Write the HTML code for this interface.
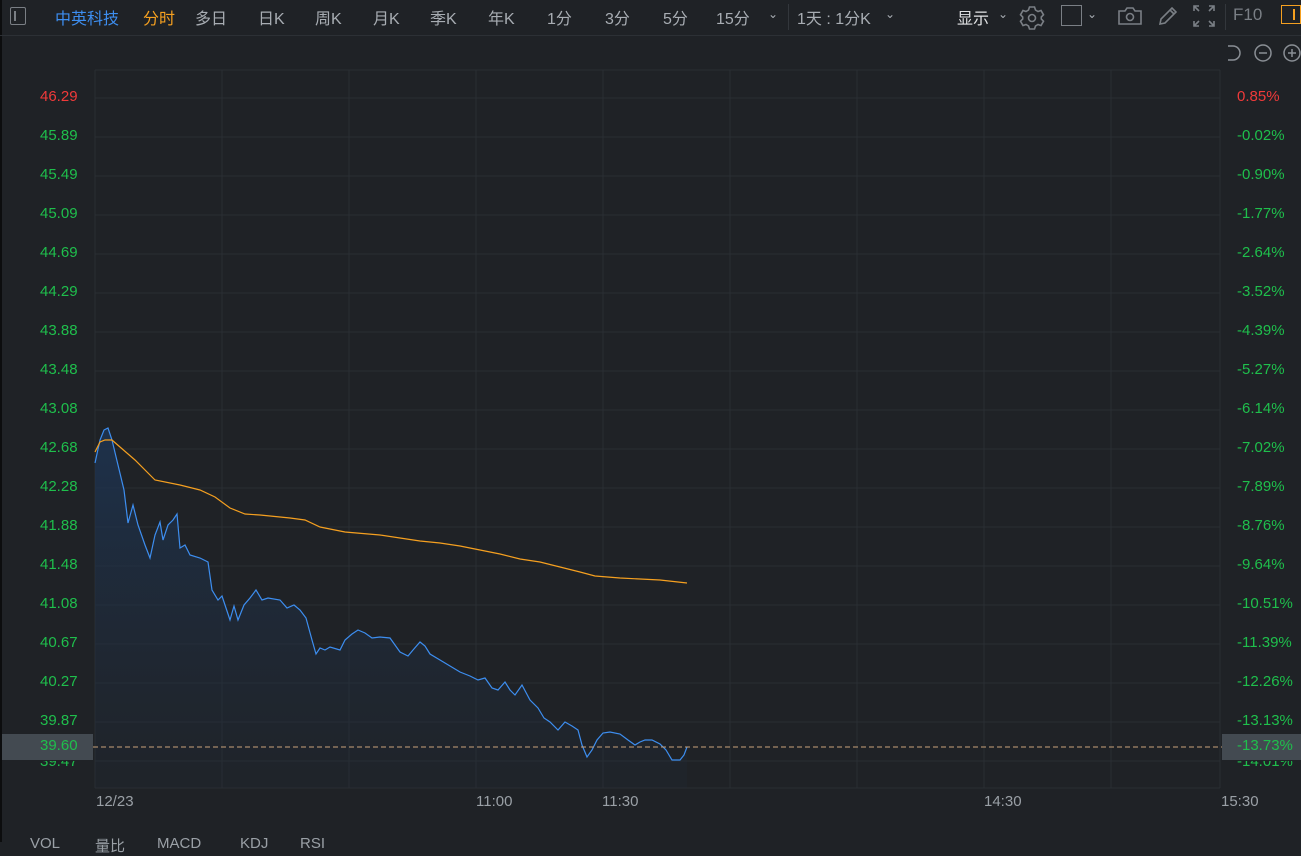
<!DOCTYPE html><html><head><meta charset="utf-8"><style>
body{margin:0;width:1301px;height:842px;overflow:hidden;background:#1f2226;font-family:"Liberation Sans","Noto Sans CJK SC",sans-serif;position:relative}
.t{position:absolute;top:5px;font-size:16px;color:#a8adb3;white-space:nowrap}
.l{position:absolute;font-size:15px;color:#1fbf4c;white-space:nowrap}
.lr{position:absolute;left:1237px;font-size:15px;color:#1fbf4c}
.b{position:absolute;top:835px;font-size:15px;color:#9aa0a6}
</style></head><body>
<div style="position:absolute;left:0;top:0;width:2px;height:842px;background:#0c0d0e"></div>
<div style="position:absolute;left:0;top:35px;width:1301px;height:1px;background:#2c3035"></div>
<div style="position:absolute;left:10px;top:7px;width:14px;height:16px;border:1.5px solid #7a7f85;border-radius:2px"></div>
<div style="position:absolute;left:14px;top:11px;width:1.5px;height:10px;background:#7a7f85"></div>
<div class="t" style="left:55px;color:#3d8ef0">中英科技</div>
<div class="t" style="left:143px;color:#f5a020">分时</div>
<div class="t" style="left:195px">多日</div>
<div class="t" style="left:258px">日K</div>
<div class="t" style="left:315px">周K</div>
<div class="t" style="left:373px">月K</div>
<div class="t" style="left:430px">季K</div>
<div class="t" style="left:488px">年K</div>
<div class="t" style="left:547px">1分</div>
<div class="t" style="left:605px">3分</div>
<div class="t" style="left:663px">5分</div>
<div class="t" style="left:716px">15分</div>
<div class="t" style="left:768px;font-size:12px;top:7px">⌄</div>
<div style="position:absolute;left:788px;top:4px;width:1px;height:26px;background:#33373c"></div>
<div class="t" style="left:797px">1天 : 1分K</div>
<div class="t" style="left:885px;font-size:12px;top:7px">⌄</div>
<div class="t" style="left:957px;color:#e0e2e4">显示</div>
<div class="t" style="left:998px;font-size:12px;top:7px">⌄</div>
<svg style="position:absolute;left:1018px;top:3px" width="28" height="28" viewBox="0 0 28 28" fill="none" stroke="#7a7f85" stroke-width="1.6"><path d="M11.5 4h5l1 3 2.5 1.5 3-1 2.5 4.3-2.2 2.2v2l2.2 2.2-2.5 4.3-3-1-2.5 1.5-1 3h-5l-1-3L8 21.5l-3 1-2.5-4.3L4.7 16v-2L2.5 11.8 5 7.5l3 1L10.5 7z"/><circle cx="14" cy="15" r="3.5"/></svg>
<div style="position:absolute;left:1061px;top:5px;width:19px;height:19px;border:1.5px solid #7a7f85"></div>
<div class="t" style="left:1087px;font-size:12px;top:7px">⌄</div>
<svg style="position:absolute;left:1117px;top:4px" width="26" height="24" viewBox="0 0 26 24" fill="none" stroke="#7a7f85" stroke-width="1.6"><path d="M2 7h6l2-3h6l2 3h6v13H2z"/><circle cx="13" cy="13" r="3.5"/></svg>
<svg style="position:absolute;left:1156px;top:4px" width="24" height="24" viewBox="0 0 24 24" fill="none" stroke="#7a7f85" stroke-width="1.6"><path d="M4 20l1-5L16 4l4 4L9 19z M14 6l4 4"/></svg>
<svg style="position:absolute;left:1192px;top:4px" width="24" height="24" viewBox="0 0 24 24" fill="none" stroke="#7a7f85" stroke-width="1.6"><path d="M2 7V2h5M2 2l5 5M17 2h5v5M22 2l-5 5M2 17v5h5M2 22l5-5M22 17v5h-5M22 22l-5-5"/></svg>
<div style="position:absolute;left:1225px;top:4px;width:1px;height:26px;background:#33373c"></div>
<div class="t" style="left:1233px;font-size:17px;color:#7a7f85">F10</div>
<div style="position:absolute;left:1281px;top:5px;width:20px;height:19px;border:1.5px solid #f5a020;box-sizing:border-box"></div>
<div style="position:absolute;left:1293px;top:9px;width:2px;height:11px;background:#f5a020"></div>
<svg style="position:absolute;left:1224px;top:42px" width="77" height="22" viewBox="0 0 77 22" fill="none" stroke="#8a8f95" stroke-width="1.5"><path d="M4 4h5a7 7 0 0 1 0 14H4"/><circle cx="39" cy="11" r="8"/><path d="M35 11h8"/><circle cx="68" cy="11" r="8"/><path d="M64 11h8M68 7v8"/></svg>
<svg style="position:absolute;left:0;top:0" width="1301" height="842">
<defs><linearGradient id="g" x1="0" y1="0" x2="0" y2="1"><stop offset="0" stop-color="#1e3350" stop-opacity=".9"/><stop offset="1" stop-color="#1f2a38" stop-opacity=".2"/></linearGradient></defs>
<g stroke="#2a2e33" stroke-width="1">
<line x1="95" y1="70" x2="1220" y2="70"/>
<line x1="95" y1="98" x2="1220" y2="98"/><line x1="95" y1="137" x2="1220" y2="137"/><line x1="95" y1="176" x2="1220" y2="176"/><line x1="95" y1="215" x2="1220" y2="215"/><line x1="95" y1="254" x2="1220" y2="254"/><line x1="95" y1="293" x2="1220" y2="293"/><line x1="95" y1="332" x2="1220" y2="332"/><line x1="95" y1="371" x2="1220" y2="371"/><line x1="95" y1="410" x2="1220" y2="410"/><line x1="95" y1="449" x2="1220" y2="449"/><line x1="95" y1="488" x2="1220" y2="488"/><line x1="95" y1="527" x2="1220" y2="527"/><line x1="95" y1="566" x2="1220" y2="566"/><line x1="95" y1="605" x2="1220" y2="605"/><line x1="95" y1="644" x2="1220" y2="644"/><line x1="95" y1="683" x2="1220" y2="683"/><line x1="95" y1="722" x2="1220" y2="722"/><line x1="95" y1="761" x2="1220" y2="761"/><line x1="95" y1="788" x2="1220" y2="788"/>
<line x1="95" y1="70" x2="95" y2="788"/><line x1="222" y1="70" x2="222" y2="788"/><line x1="349" y1="70" x2="349" y2="788"/><line x1="476" y1="70" x2="476" y2="788"/><line x1="603" y1="70" x2="603" y2="788"/><line x1="730" y1="70" x2="730" y2="788"/><line x1="857" y1="70" x2="857" y2="788"/><line x1="984" y1="70" x2="984" y2="788"/><line x1="1111" y1="70" x2="1111" y2="788"/><line x1="1220" y1="70" x2="1220" y2="788"/>
</g>
<polygon fill="url(#g)" points="95,463 100,440 104,430 108,428 112,440 118,465 124,490 128,523 133,505 138,525 145,545 150,558 155,535 160,522 163,540 168,525 173,520 177,514 180,548 185,545 190,555 200,558 208,562 212,590 218,600 222,596 226,608 230,620 234,606 238,620 244,605 250,598 256,590 262,600 268,598 280,600 287,608 294,605 300,610 306,618 312,640 316,654 320,648 325,650 330,647 340,650 345,640 352,634 358,630 365,633 372,638 380,637 390,638 395,645 400,652 408,656 413,650 420,642 425,646 430,654 440,660 450,666 460,672 470,676 478,680 485,678 492,688 498,690 505,682 510,690 515,695 522,685 530,700 538,708 544,718 550,722 558,730 565,722 572,726 578,730 582,745 587,757 592,750 597,740 603,733 610,732 620,734 628,740 635,745 640,742 645,740 652,740 660,744 666,750 672,760 680,760 684,755 687,747 687,788 95,788"/>
<polyline fill="none" stroke="#3d8ef0" stroke-width="1.2" points="95,463 100,440 104,430 108,428 112,440 118,465 124,490 128,523 133,505 138,525 145,545 150,558 155,535 160,522 163,540 168,525 173,520 177,514 180,548 185,545 190,555 200,558 208,562 212,590 218,600 222,596 226,608 230,620 234,606 238,620 244,605 250,598 256,590 262,600 268,598 280,600 287,608 294,605 300,610 306,618 312,640 316,654 320,648 325,650 330,647 340,650 345,640 352,634 358,630 365,633 372,638 380,637 390,638 395,645 400,652 408,656 413,650 420,642 425,646 430,654 440,660 450,666 460,672 470,676 478,680 485,678 492,688 498,690 505,682 510,690 515,695 522,685 530,700 538,708 544,718 550,722 558,730 565,722 572,726 578,730 582,745 587,757 592,750 597,740 603,733 610,732 620,734 628,740 635,745 640,742 645,740 652,740 660,744 666,750 672,760 680,760 684,755 687,747"/>
<polyline fill="none" stroke="#f5a020" stroke-width="1.2" points="95,452 100,442 105,440 112,440 120,447 135,460 150,475 155,480 180,485 200,490 215,497 230,508 245,514 260,515 290,518 305,520 320,527 345,532 380,535 400,538 420,541 440,543 460,546 480,550 500,554 520,559 540,562 560,567 580,572 595,576 620,578 660,580 687,583"/>
<line x1="93" y1="747" x2="1222" y2="747" stroke="#c8a27a" stroke-width="1" stroke-dasharray="5,3"/>
</svg>
<div style="position:absolute;left:2px;top:734px;width:91px;height:26px;background:#434a51"></div>
<div style="position:absolute;left:1222px;top:734px;width:79px;height:26px;background:#434a51"></div>
<div class="l" style="left:40px;top:88px;color:#f03a3a">46.29</div>
<div class="l" style="left:40px;top:127px">45.89</div><div class="l" style="left:40px;top:166px">45.49</div><div class="l" style="left:40px;top:205px">45.09</div><div class="l" style="left:40px;top:244px">44.69</div><div class="l" style="left:40px;top:283px">44.29</div><div class="l" style="left:40px;top:322px">43.88</div><div class="l" style="left:40px;top:361px">43.48</div><div class="l" style="left:40px;top:400px">43.08</div><div class="l" style="left:40px;top:439px">42.68</div><div class="l" style="left:40px;top:478px">42.28</div><div class="l" style="left:40px;top:517px">41.88</div><div class="l" style="left:40px;top:556px">41.48</div><div class="l" style="left:40px;top:595px">41.08</div><div class="l" style="left:40px;top:634px">40.67</div><div class="l" style="left:40px;top:673px">40.27</div><div class="l" style="left:40px;top:712px">39.87</div><div class="l" style="left:40px;top:753px;clip-path:inset(8px 0 0 0)">39.47</div><div class="l" style="left:40px;top:737px">39.60</div>
<div class="lr" style="top:88px;color:#f03a3a">0.85%</div>
<div class="lr" style="top:127px">-0.02%</div><div class="lr" style="top:166px">-0.90%</div><div class="lr" style="top:205px">-1.77%</div><div class="lr" style="top:244px">-2.64%</div><div class="lr" style="top:283px">-3.52%</div><div class="lr" style="top:322px">-4.39%</div><div class="lr" style="top:361px">-5.27%</div><div class="lr" style="top:400px">-6.14%</div><div class="lr" style="top:439px">-7.02%</div><div class="lr" style="top:478px">-7.89%</div><div class="lr" style="top:517px">-8.76%</div><div class="lr" style="top:556px">-9.64%</div><div class="lr" style="top:595px">-10.51%</div><div class="lr" style="top:634px">-11.39%</div><div class="lr" style="top:673px">-12.26%</div><div class="lr" style="top:712px">-13.13%</div><div class="lr" style="top:753px;clip-path:inset(8px 0 0 0)">-14.01%</div><div class="lr" style="top:737px">-13.73%</div>
<div class="l" style="left:96px;top:793px;color:#9aa0a6">12/23</div>
<div class="l" style="left:476px;top:793px;color:#9aa0a6">11:00</div>
<div class="l" style="left:602px;top:793px;color:#9aa0a6">11:30</div>
<div class="l" style="left:984px;top:793px;color:#9aa0a6">14:30</div>
<div class="l" style="left:1221px;top:793px;color:#9aa0a6">15:30</div>
<div class="b" style="left:30px">VOL</div>
<div class="b" style="left:95px">量比</div>
<div class="b" style="left:157px">MACD</div>
<div class="b" style="left:240px">KDJ</div>
<div class="b" style="left:300px">RSI</div>
</body></html>
